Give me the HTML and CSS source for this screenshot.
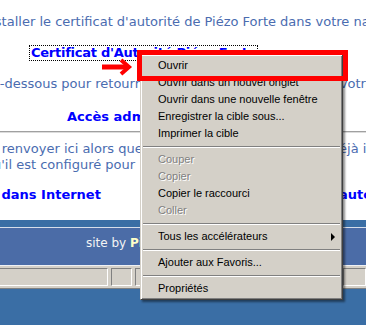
FILE: index.html
```html
<!DOCTYPE html>
<html>
<head>
  <meta charset="UTF-8">
  <title>Certificat Piézo Forte</title>
  <link rel="stylesheet" href="styles.css">
</head>
<body>
  <div id="screen">
    <div id="page">
      <p class="line l1">installer le certificat d'autorité de Piézo Forte dans votre navigateur</p>
      <p class="line l2"><a class="link focus" href="#">Certificat d'Autorité Piézo Forte</a></p>
      <p class="line l3">ci-dessous pour retourner à l'accès administration de votre site</p>
      <p class="line l4"><a class="link" href="#">Accès administration</a></p>
      <hr>
      <p class="line l6">vous renvoyer ici alors que votre certificat est pourtant déjà installé</p>
      <p class="line l7">c'est qu'il est configuré pour</p>
      <p class="line l8">
        <a class="link" href="#">Installer dans Internet</a>
        <a class="link" href="#">autorité de certification</a>
      </p>
    </div>

    <div id="footer">
      <div class="footer-inner">site by&nbsp;<b>Piézo Forte</b></div>
    </div>

    <div id="statusbar">
      <span class="panel p1"></span>
      <span class="panel p2"></span>
      <span class="panel p3"></span>
      <span class="panel p4"></span>
    </div>
    <div id="desktop"></div>

    <!-- context menu + annotation -->
    <ul id="menu">
      <li>Ouvrir</li>
      <li>Ouvrir dans un nouvel onglet</li>
      <li>Ouvrir dans une nouvelle fenêtre</li>
      <li>Enregistrer la cible sous...</li>
      <li>Imprimer la cible</li>
      <li class="sep"></li>
      <li class="off">Couper</li>
      <li class="off">Copier</li>
      <li>Copier le raccourci</li>
      <li class="off">Coller</li>
      <li class="sep"></li>
      <li class="sub">Tous les accélérateurs</li>
      <li class="sep"></li>
      <li>Ajouter aux Favoris...</li>
      <li class="sep"></li>
      <li>Propriétés</li>
    </ul>

    <div id="callout"></div>
    <svg id="arrow" width="36" height="22" viewBox="0 0 36 22">
      <path d="M4 11 H29" stroke="#f00" stroke-width="5" fill="none"/>
      <path d="M23 4 L31 11 L23 18" stroke="#f00" stroke-width="4" fill="none"/>
    </svg>
  </div>
</body>
</html>
```

FILE: styles.css
```css
body {
  margin: 0;
  background: #3a6ea5;
}
#screen {
  position: relative;
  width: 366px;
  height: 325px;
  overflow: hidden;
}

/* page content */
#page {
  height: 220px;
  box-sizing: border-box;
  padding-top: 14px;
  background: #fff;
  overflow: hidden;
  font: 13px/16px "DejaVu Sans", Verdana, sans-serif;
  color: #4a6cb0;
}
.line {
  margin: 0;
  white-space: nowrap;
}
.link {
  color: #0000ff;
  font-weight: bold;
  text-decoration: none;
}
.l1 { margin-left: -17px; }
.l2 {
  display: flex;
  margin-top: 15px;
  padding-left: 29px;
}
.focus {
  border: 1px dotted #000;
  line-height: 14px;
  padding: 0 1px;
  letter-spacing: -0.25px;
}
.l3 { margin-top: 15px; margin-left: -11px; }
.l4 { margin-top: 17px; padding-left: 67px; }
hr {
  margin: 6px 0 0;
  border: 0;
  border-top: 1px solid #a0a0a0;
  border-bottom: 1px solid #dcdcdc;
}
.l6 { margin-top: 8px; margin-left: -33px; }
.l7 { margin-left: -50px; }
.l8 {
  display: flex;
  gap: 238px;
  margin-top: 14px;
  margin-left: -64px;
}

/* footer band */
#footer {
  height: 38px;
  background: #4b6ca7;
  border-bottom: 1px solid #eef0f4;
}
.footer-inner {
  display: flex;
  align-items: center;
  margin-top: 7px;
  height: 30px;
  border-top: 1px solid #d6deea;
  padding-left: 86px;
  font: 12px "DejaVu Sans", Verdana, sans-serif;
  color: #f4f4f4;
}
.footer-inner b { color: #ffffc8; }

/* status bar */
#statusbar {
  display: flex;
  gap: 3px;
  height: 18px;
  padding: 2px 0;
  margin-left: -3px;
  background: #d4d0c8;
  border-bottom: 1px solid #808080;
}
.panel {
  border: 1px solid;
  border-color: #808080 #fff #fff #808080;
}
.p1 { width: 109px; }
.p2 { width: 19px; }
.p3 { width: 203px; }
.p4 { flex: 1; }
#desktop {
  height: 42px;
  background: #3a6ea5;
}

/* context menu */
#menu {
  position: absolute;
  left: 140px;
  top: 54px;
  width: 203px;
  box-sizing: border-box;
  margin: 0;
  padding: 2px 1px;
  list-style: none;
  background: #d4d0c8;
  border: 1px solid;
  border-color: #d4d0c8 #404040 #404040 #d4d0c8;
  box-shadow: inset 1px 1px #fff, inset -1px -1px #808080, 2px 2px 2px rgba(0,0,0,0.45);
  font: 11px "Liberation Sans", Tahoma, sans-serif;
  color: #000;
}
#menu li {
  height: 17px;
  line-height: 17px;
  padding-left: 16px;
}
#menu li.off {
  color: #808080;
  text-shadow: 1px 1px #fff;
}
#menu li.sub {
  display: flex;
  justify-content: space-between;
  align-items: center;
}
#menu li.sub::after {
  content: "";
  margin-right: 6px;
  border-left: 4px solid #000;
  border-top: 4px solid transparent;
  border-bottom: 4px solid transparent;
}
#menu li.sep {
  height: 0;
  margin: 4px 1px 3px;
  padding: 0;
  border-top: 1px solid #808080;
  border-bottom: 1px solid #fff;
}

/* red annotation */
#callout {
  position: absolute;
  left: 137px;
  top: 50px;
  width: 211px;
  height: 31px;
  box-sizing: border-box;
  border: 5px solid #f00;
}
#arrow {
  position: absolute;
  left: 98px;
  top: 56px;
}
```
